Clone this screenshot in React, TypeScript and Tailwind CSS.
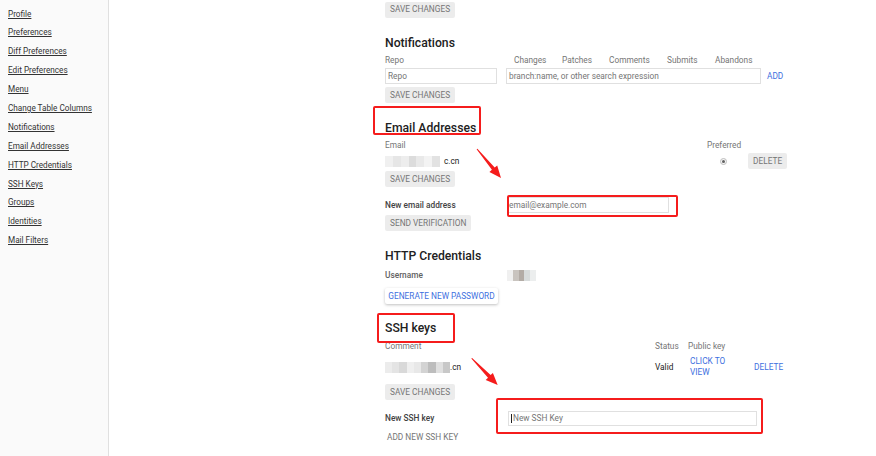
import React from "react";

const links = [
  "Profile",
  "Preferences",
  "Diff Preferences",
  "Edit Preferences",
  "Menu",
  "Change Table Columns",
  "Notifications",
  "Email Addresses",
  "HTTP Credentials",
  "SSH Keys",
  "Groups",
  "Identities",
  "Mail Filters",
];

function GrayButton({ label, className = "" }: { label: string; className?: string }) {
  return (
    <div
      className={`flex h-[16px] w-fit items-center rounded-[2px] bg-[#ececec] px-[5px] text-[8.3px] uppercase text-[#757575] ${className}`}
    >
      {label}
    </div>
  );
}

function Heading({ children, className = "" }: { children: React.ReactNode; className?: string }) {
  return <h2 className={`h-[16px] text-[12.2px] font-medium leading-[16px] text-[#212121] ${className}`}>{children}</h2>;
}

function Blur({ colors, className = "" }: { colors: string[]; className?: string }) {
  return (
    <div className={`flex h-[11px] blur-[0.6px] ${className}`}>
      {colors.map((c, i) => (
        <div key={i} className="h-full flex-1" style={{ backgroundColor: c }} />
      ))}
    </div>
  );
}

function Sidebar() {
  return (
    <nav className="h-full w-[109px] shrink-0 border-r border-[#e0e0e0] bg-[#fafafa] pl-[8px] pt-[4.5px]">
      {links.map((l) => (
        <div key={l} className="h-[18.9px] text-[8.2px] leading-[18.9px] text-[#333] underline">
          {l}
        </div>
      ))}
    </nav>
  );
}

function Annotations() {
  return (
    <>
      <div className="absolute left-[373px] top-[106px] h-[29px] w-[108px] rounded-[2px] border-2 border-[#f51c1c]" />
      <div className="absolute left-[507px] top-[195px] h-[22px] w-[171px] rounded-[2px] border-2 border-[#f51c1c]" />
      <div className="absolute left-[377px] top-[313px] h-[30px] w-[78px] rounded-[2px] border-2 border-[#f51c1c]" />
      <div className="absolute left-[496px] top-[398px] h-[36px] w-[267px] rounded-[2px] border-2 border-[#f51c1c]" />
      <svg className="pointer-events-none absolute left-0 top-0" width="876" height="456">
        <polygon
          fill="#f51c1c"
          points="476.6,149.3 491.9,169.8 489.4,171.9 501,178 497.2,165.5 494.7,167.6 477.4,148.7"
        />
        <polygon
          fill="#f51c1c"
          points="471.3,358.6 488,377.7 485.7,379.9 497.7,385 492.9,372.9 490.6,375.1 472.1,357.9"
        />
      </svg>
    </>
  );
}

export default function App() {
  return (
    <div className="relative flex h-[456px] w-[876px] overflow-hidden bg-white font-['Roboto',sans-serif] text-[8.3px] text-[#212121]">
      <Sidebar />
      <main className="flex flex-col pl-[276px]">
        <GrayButton label="Save changes" className="mt-[1.5px]" />

        <Heading className="mt-[17.5px]">Notifications</Heading>
        <div className="mt-[4px] flex h-[10px] items-center text-[#757575]">
          <span className="w-[129px]">Repo</span>
          <span className="w-[48px]">Changes</span>
          <span className="w-[47px]">Patches</span>
          <span className="w-[58px]">Comments</span>
          <span className="w-[48px]">Submits</span>
          <span>Abandons</span>
        </div>
        <div className="mt-[3px] flex items-center">
          <div className="flex h-[16px] w-[112px] items-center border border-[#e0e0e0] px-[2px] text-[#757575]">Repo</div>
          <div className="ml-[9px] flex h-[16px] w-[255px] items-center border border-[#e0e0e0] px-[2px] text-[#757575]">
            branch:name, or other search expression
          </div>
          <span className="ml-[6px] text-[#3d6fe0]">ADD</span>
        </div>
        <GrayButton label="Save changes" className="mt-[3px]" />

        <Heading className="mt-[17px]">Email Addresses</Heading>
        <div className="mt-[4px] flex h-[10px] items-center text-[#757575]">
          <span className="w-[322px]">Email</span>
          <span>Preferred</span>
        </div>
        <div className="mt-[3px] flex h-[16px] items-center">
          <div className="flex w-[322px] items-center">
            <Blur
              colors={["#f0f0f0", "#e6e6e6", "#ededed", "#dcdcdc", "#e9e9e9", "#f3f3f3", "#e2e2e2"]}
              className="w-[55px]"
            />
            <span className="ml-[4px]">c.cn</span>
          </div>
          <div className="w-[41px] pl-[13px]">
            <div className="flex h-[7px] w-[7px] items-center justify-center rounded-full border border-[#bdbdbd] bg-[#f5f5f5]">
              <div className="h-[3px] w-[3px] rounded-full bg-[#616161]" />
            </div>
          </div>
          <GrayButton label="Delete" className="w-[41px] justify-center" />
        </div>
        <GrayButton label="Save changes" className="mt-[2px]" />

        <div className="mt-[10px] flex h-[16px] items-center">
          <span className="w-[122px] font-medium text-[#424242]">New email address</span>
          <div className="flex h-[16px] w-[162px] items-center border border-[#e0e0e0] px-[1px] text-[#757575]">
            email@example.com
          </div>
        </div>
        <GrayButton label="Send verification" className="mt-[2px]" />

        <Heading className="mt-[17px]">HTTP Credentials</Heading>
        <div className="mt-[6px] flex h-[10px] items-center">
          <span className="w-[122px] font-medium text-[#616161]">Username</span>
          <Blur colors={["#f0f0f0", "#c9c4bf", "#b3aca6", "#d8dcdc", "#eceeee"]} className="h-[10px] w-[29px]" />
        </div>
        <div className="mt-[8px] flex h-[16px] w-[113px] items-center justify-center rounded-[2px] bg-white text-[8.3px] uppercase text-[#3d6fe0] shadow-[0_1px_3px_rgba(0,0,0,0.25)]">
          Generate new password
        </div>

        <Heading className="mt-[16px]">SSH keys</Heading>
        <div className="mt-[5px] flex h-[10px] items-center text-[#757575]">
          <span className="w-[270px]">Comment</span>
          <span className="w-[33px]">Status</span>
          <span>Public key</span>
        </div>
        <div className="mt-[5px] flex h-[22px] items-center">
          <div className="flex w-[270px] items-center">
            <Blur
              colors={["#ececec", "#e4e4e4", "#d9d9d9", "#efefef", "#e8e8e8", "#d3d3d3", "#bdbdbd", "#e0e0e0", "#c8c8c8"]}
              className="w-[65px]"
            />
            <span>.cn</span>
          </div>
          <span className="w-[35px]">Valid</span>
          <span className="w-[64px] uppercase leading-[11px] text-[#3d6fe0]">
            Click to
            <br />
            view
          </span>
          <span className="uppercase text-[#3d6fe0]">Delete</span>
        </div>
        <GrayButton label="Save changes" className="mt-[6px]" />

        <div className="mt-[11px] flex h-[15px] items-center">
          <span className="w-[123px] font-medium text-[#424242]">New SSH key</span>
          <div className="flex h-[15px] w-[249px] items-center border border-[#e0e0e0] px-[2px] text-[#757575]">
            <span className="mr-[1px] h-[9px] w-px bg-[#212121]" />
            New SSH Key
          </div>
        </div>
        <div className="mt-[6px] ml-[2px] h-[10px] uppercase leading-[10px] text-[#757575]">Add new SSH key</div>
      </main>
      <Annotations />
    </div>
  );
}
